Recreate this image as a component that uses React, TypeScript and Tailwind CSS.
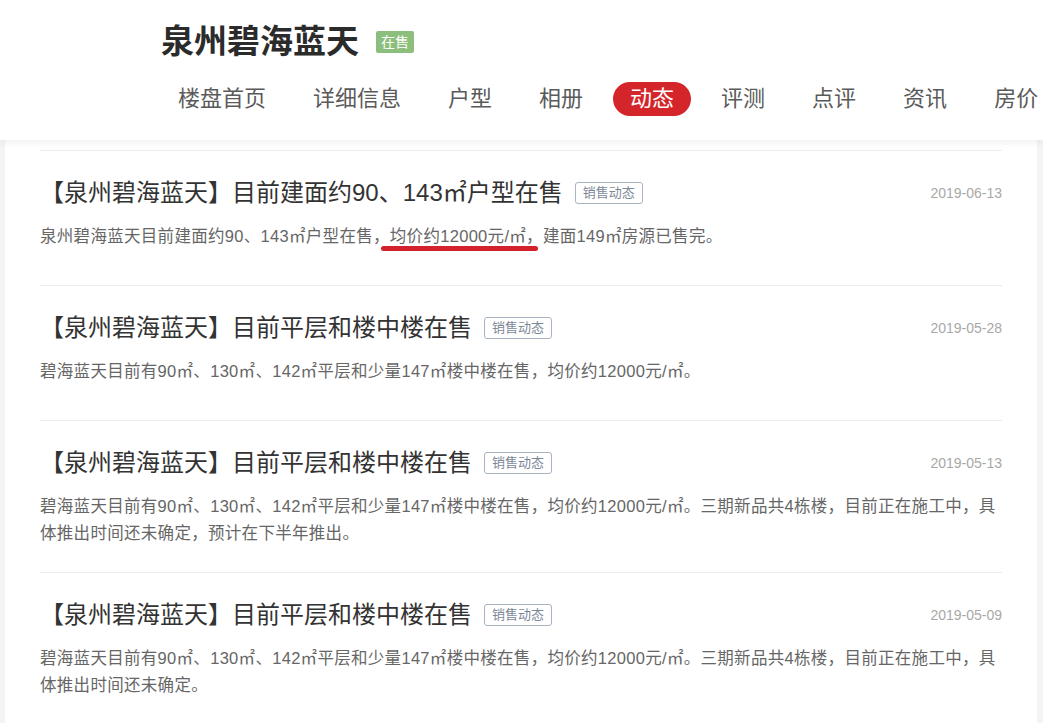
import React from "react";

const navItems = ["楼盘首页", "详细信息", "户型", "相册", "动态", "评测", "点评", "资讯", "房价"];

type NewsItem = {
  title: string;
  date: string;
  desc: React.ReactNode;
};

const news: NewsItem[] = [
  {
    title: "【泉州碧海蓝天】目前建面约90、143㎡户型在售",
    date: "2019-06-13",
    desc: (
      <>
        泉州碧海蓝天目前建面约90、143㎡户型在售，
        <span className="relative">
          均价约12000元/㎡，
          <span className="absolute left-[-9px] right-[5px] top-[calc(100%+1px)] h-[5px] rounded-full bg-[#d3222c]" />
        </span>
        建面149㎡房源已售完。
      </>
    ),
  },
  {
    title: "【泉州碧海蓝天】目前平层和楼中楼在售",
    date: "2019-05-28",
    desc: "碧海蓝天目前有90㎡、130㎡、142㎡平层和少量147㎡楼中楼在售，均价约12000元/㎡。",
  },
  {
    title: "【泉州碧海蓝天】目前平层和楼中楼在售",
    date: "2019-05-13",
    desc: "碧海蓝天目前有90㎡、130㎡、142㎡平层和少量147㎡楼中楼在售，均价约12000元/㎡。三期新品共4栋楼，目前正在施工中，具体推出时间还未确定，预计在下半年推出。",
  },
  {
    title: "【泉州碧海蓝天】目前平层和楼中楼在售",
    date: "2019-05-09",
    desc: "碧海蓝天目前有90㎡、130㎡、142㎡平层和少量147㎡楼中楼在售，均价约12000元/㎡。三期新品共4栋楼，目前正在施工中，具体推出时间还未确定。",
  },
];

export default function App() {
  return (
    <div className="min-h-[723px] bg-[#f4f4f4] font-['Liberation_Sans','Noto_Sans_CJK_SC',sans-serif]">
      {/* header */}
      <div className="relative z-10 h-[140px] overflow-hidden bg-white pl-[161px] shadow-[0_2px_8px_rgba(0,0,0,0.07)]">
        <div className="flex items-center pt-[20px]">
          <h1 className="text-[33px] font-bold leading-[44px] text-[#2b2b2b]">泉州碧海蓝天</h1>
          <span className="ml-[17px] rounded-[2px] bg-[#8dbf7c] px-[5px] text-[14px] leading-[22px] text-white">在售</span>
        </div>
        <div className="mt-[18px] flex gap-[13px] whitespace-nowrap">
          {navItems.map((item) => (
            <span
              key={item}
              className={
                item === "动态"
                  ? "rounded-full bg-[#d4252b] px-[17px] text-[22px] leading-[34px] text-white"
                  : "px-[17px] text-[22px] leading-[34px] text-[#5a5a5a]"
              }
            >
              {item}
            </span>
          ))}
        </div>
      </div>

      {/* news list */}
      <div className="mx-[5px] mr-[6px] bg-white px-[35px] pt-[10px]">
        <div className="border-t border-[#ececec]">
          {news.map((n) => (
            <div key={n.date} className="min-h-[135px] border-b border-[#ececec] pt-[26px] pb-[25px]">
              <div className="flex items-center">
                <span className="text-[24px] leading-[32px] text-[#333]">{n.title}</span>
                <span className="ml-[12px] rounded-[3px] border border-[#a9b3c1] px-[7px] text-[13px] leading-[20px] text-[#7d8897]">
                  销售动态
                </span>
                <span className="ml-auto text-[14px] text-[#a8a8a8]">{n.date}</span>
              </div>
              <p className="mt-[14px] w-[960px] text-[16.5px] leading-[27px] tracking-[0.3px] text-[#666]">{n.desc}</p>
            </div>
          ))}
        </div>
      </div>
    </div>
  );
}
